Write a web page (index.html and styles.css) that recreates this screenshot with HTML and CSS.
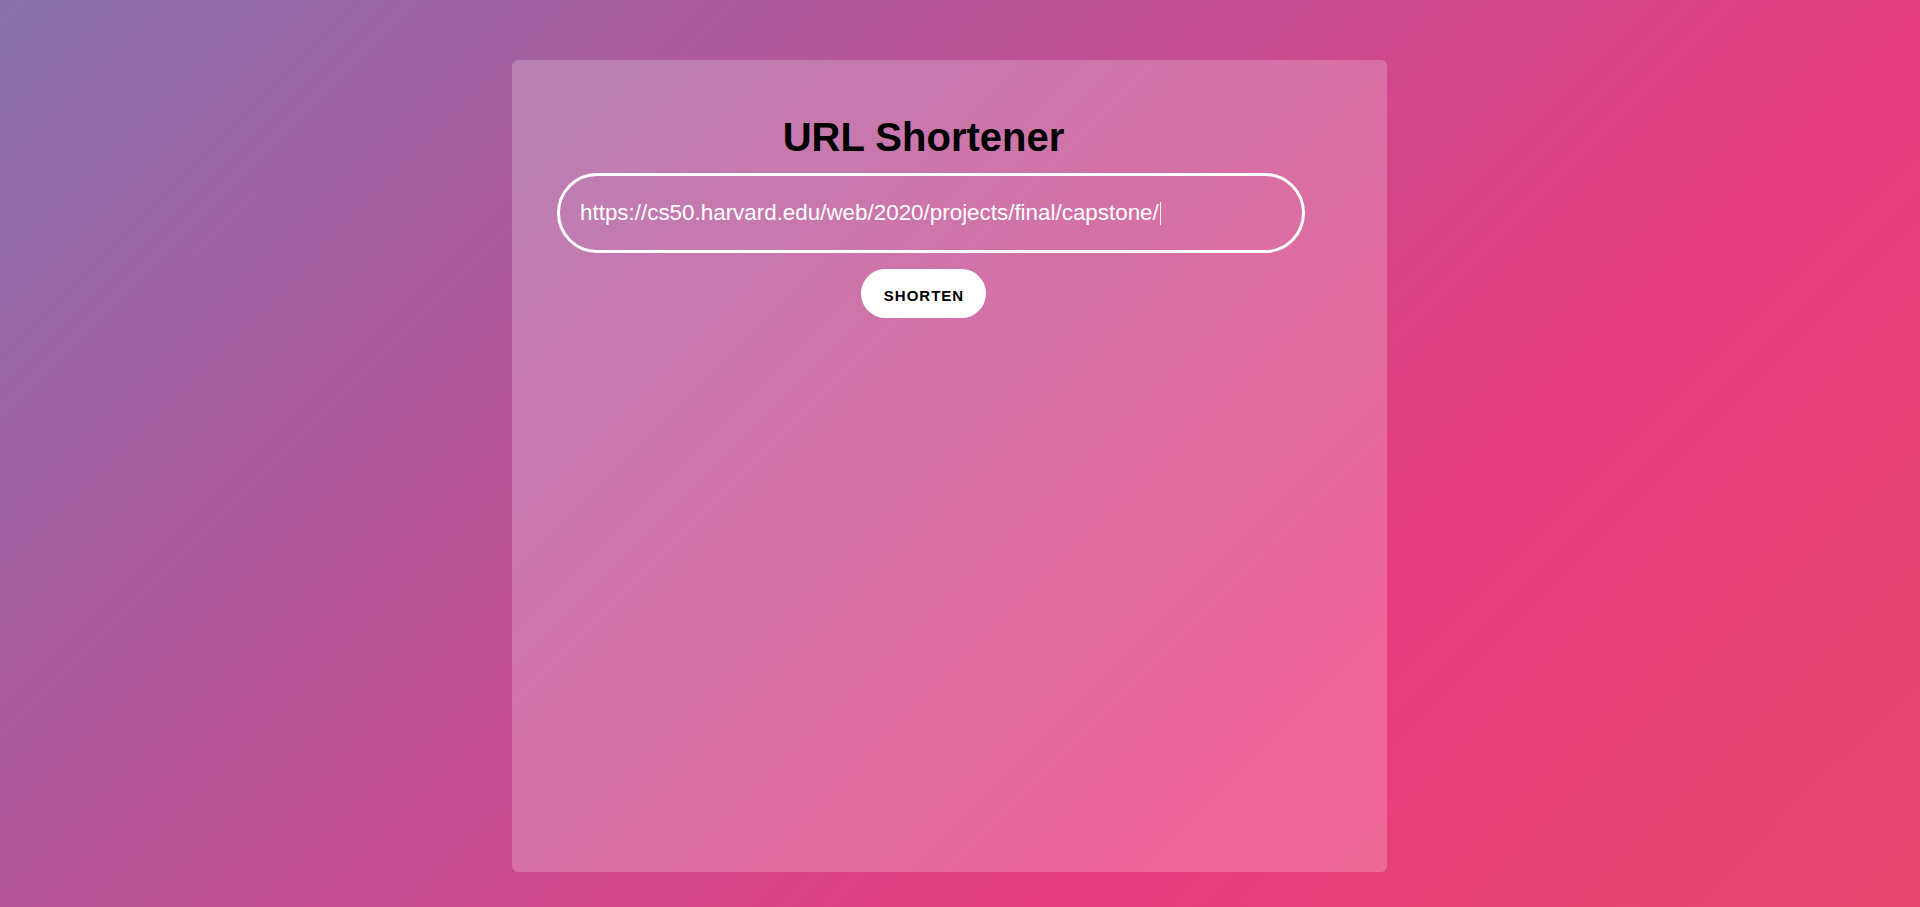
FILE: index.html
```html
<!DOCTYPE html>
<html lang="en">
<head>
<meta charset="utf-8">
<title>URL Shortener</title>
<link rel="stylesheet" href="styles.css">
</head>
<body>
  <main class="card">
    <h1 class="title">URL Shortener</h1>
    <form class="shorten-form">
      <div class="url-field"><span class="url-text">https://cs50.harvard.edu/web/2020/projects/final/capstone/</span><span class="caret"></span></div>
      <button class="shorten-btn" type="button">SHORTEN</button>
    </form>
  </main>
</body>
</html>
```
FILE: styles.css
```css
html {
  min-height: 100%;
}

body {
  margin: 0;
  font-family: "Liberation Sans", Arial, sans-serif;
  background: linear-gradient(-45deg, #e9496f 0%, #e73c7e 31%, #b4579b 69%, #8872ac 100%);
  display: flex;
  flex-direction: column;
  align-items: center;
}

.card {
  box-sizing: border-box;
  width: 875px;
  height: 812px;
  margin: 60px 21px 58px 0;
  padding: 54px 52px 0 0;
  background: rgba(255, 255, 255, 0.21);
  border-radius: 6px;
  display: flex;
  flex-direction: column;
  align-items: center;
}

.title {
  margin: 0;
  font-size: 40px;
  line-height: 46px;
  font-weight: 700;
  color: #000;
}

.shorten-form {
  align-self: stretch;
  display: flex;
  flex-direction: column;
  align-items: center;
}

.url-field {
  box-sizing: border-box;
  align-self: flex-start;
  margin: 13px 0 0 45px;
  width: 748px;
  height: 80px;
  border: 3px solid #fff;
  border-radius: 40px;
  padding: 0 20px;
  display: flex;
  align-items: center;
  color: #fff;
  font-size: 22.4px;
  white-space: nowrap;
}

.caret {
  display: inline-block;
  width: 1px;
  height: 23px;
  margin-left: 1px;
  background: #f4f4f4;
}

.shorten-btn {
  margin-top: 16px;
  height: 49px;
  padding: 3px 22px 0 23px;
  border: none;
  border-radius: 25px;
  background: #fff;
  color: #000;
  font-family: "Liberation Sans", Arial, sans-serif;
  font-size: 15px;
  font-weight: 700;
  letter-spacing: 1px;
  cursor: pointer;
}
```
